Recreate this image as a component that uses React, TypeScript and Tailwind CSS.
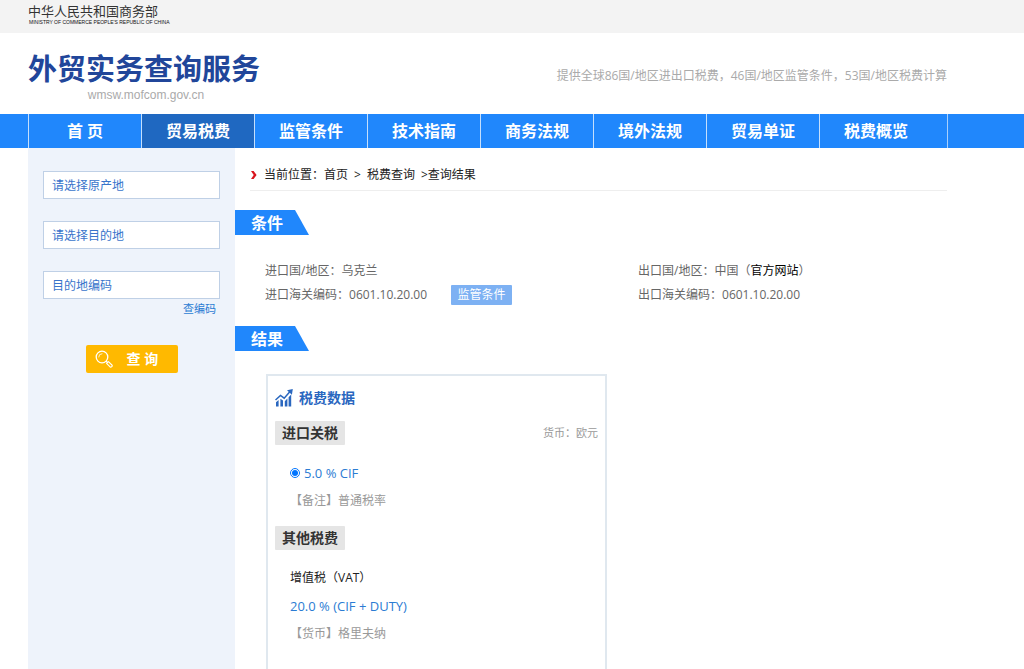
import type { ReactNode } from "react";

const navItems = [
  "首 页",
  "贸易税费",
  "监管条件",
  "技术指南",
  "商务法规",
  "境外法规",
  "贸易单证",
  "税费概览",
];

const fields = [
  { id: "origin", label: "请选择原产地" },
  { id: "destination", label: "请选择目的地" },
  { id: "code", label: "目的地编码" },
];

const SectionTitle = ({ children }: { children: ReactNode }) => (
  <h2 className="flex h-[25px] w-[74px] items-center bg-[#2087fc] pl-4 text-base font-bold text-white [clip-path:polygon(0_0,60px_0,100%_100%,0_100%)]">
    {children}
  </h2>
);

const Tag = ({ children }: { children: ReactNode }) => (
  <h4 className="flex h-6 w-[70px] items-center justify-center rounded-[1px] bg-[#e5e5e5] text-sm font-bold text-[#333]">
    {children}
  </h4>
);

const Header = () => (
  <header>
    <div className="h-[33px] bg-[#f3f3f3] pt-[3px] pl-7">
      <p className="text-[13px] leading-[17px] text-[#333]">中华人民共和国商务部</p>
      <p className="pl-px font-['Liberation_Sans',sans-serif] text-[5px] leading-[5px] text-[#111]">
        MINISTRY OF COMMERCE PEOPLE'S REPUBLIC OF CHINA
      </p>
    </div>
    <div className="mr-[77px] ml-7 flex h-[81px] items-center justify-between">
      <div className="pt-[7px]">
        <h1 className="text-[29px] leading-9 font-bold text-[#21469a]">外贸实务查询服务</h1>
        <p className="pl-1 text-center font-['Liberation_Sans',sans-serif] text-xs leading-4 text-[#aaa]">
          wmsw.mofcom.gov.cn
        </p>
      </div>
      <p className="pt-1 text-xs text-[#aaa]">
        提供全球86国/地区进出口税费，46国/地区监管条件，53国/地区税费计算
      </p>
    </div>
    <nav className="bg-[#2087fc] pr-[76px] pl-7">
      <ul className="flex h-[34px] border-r border-[#a9d0fc]">
        {navItems.map((item) => (
          <li key={item} className="w-[113px] border-l border-[#c5dffc]">
            <a
              href="#"
              className={`flex h-full items-center justify-center text-base font-bold text-white ${
                item === "贸易税费" ? "bg-[#1f68c1]" : ""
              }`}
            >
              {item}
            </a>
          </li>
        ))}
      </ul>
    </nav>
  </header>
);

const Sidebar = () => (
  <aside className="w-[207px] shrink-0 bg-[#eef3fb] px-[15px] pt-[23px]">
    <form>
      <div className="flex flex-col gap-[22px]">
        {fields.map(({ id, label }) => (
          <input
            key={id}
            id={id}
            aria-label={label}
            placeholder={label}
            className="h-7 w-full border border-[#bfd0e6] bg-white px-2 text-xs outline-none placeholder:text-[#3874cb]"
          />
        ))}
      </div>
      <a href="#" className="block pr-1 text-right text-[11px] leading-5 text-[#2b7cd3]">
        查编码
      </a>
      <button
        type="button"
        className="mx-auto mt-[26px] flex h-7 w-[92px] items-center rounded-xs bg-[#ffb900] pl-[9px] text-sm font-bold text-white"
      >
        <svg viewBox="0 0 18 18" className="mr-[14px] size-[18px]" fill="none" stroke="#fff">
          <circle cx="7" cy="7" r="5.8" strokeWidth="1.3" />
          <path d="M3.7 7A3.3 3.3 0 0 1 7 3.7" strokeWidth=".8" strokeLinecap="round" />
          <path d="m11 11 1.5 1.5" strokeWidth="1.3" />
          <path
            d="m11.6 13.4 1.8-1.8 3.5 3.4c1 1-.8 2.8-1.8 1.8z"
            strokeWidth="1.1"
            strokeLinejoin="round"
          />
        </svg>
        查 询
      </button>
    </form>
  </aside>
);

const Breadcrumb = () => (
  <div className="ml-[15px] flex h-[43px] items-center border-b border-[#eee] pt-3 text-xs text-[#222]">
    <svg viewBox="0 0 8 10" className="mr-1.5 h-[10px] w-2" fill="#d9151e">
      <path d="M1 1h2.6l3 4-3 4H1l2.7-4z" />
    </svg>
    <span>当前位置：</span>
    <a href="#">首页</a>
    <span className="mx-1.5">&gt;</span>
    <a href="#">税费查询</a>
    <span className="ml-1.5">&gt;查询结果</span>
  </div>
);

const TaxCard = () => (
  <div className="mt-[23px] ml-[31px] w-[341px] grow border-2 border-b-0 border-[#e0e8ef] px-[7px]">
    <h3 className="mt-[10px] flex h-6 items-center gap-1.5 text-sm font-bold text-[#2a67bf]">
      <svg viewBox="0 0 18 18" className="size-[18px]" fill="#2a67bf">
        <path d="M1 13.2 3.6 11v6.5H1zM5.4 9.8 8 11.6v5.9H5.4zM9.8 12.2l2.6-2.7v8H9.8zM13.6 8.2l2.6-2.7v12h-2.6z" />
        <path
          d="m.5 11 5-4.6 3.7 2.8 5.6-6.4"
          fill="none"
          stroke="#2a67bf"
          strokeWidth="1.5"
        />
        <path d="M12 1.2 17.8 0l-.9 5.8z" />
      </svg>
      税费数据
    </h3>
    <div className="mt-[11px] flex items-center justify-between">
      <Tag>进口关税</Tag>
      <span className="text-[11px] text-[#999]">货币：欧元</span>
    </div>
    <div className="mt-[14px] mb-[11px] ml-[15px] text-xs leading-7">
      <label className="flex h-7 items-center gap-1 text-[13px] text-[#2b7cd3]">
        <input type="radio" name="rate" defaultChecked className="size-[10px] accent-[#0075ff]" />
        5.0 % CIF
      </label>
      <p className="text-[#999]">【备注】普通税率</p>
    </div>
    <Tag>其他税费</Tag>
    <div className="mt-[14px] ml-[15px] text-xs leading-7">
      <p className="text-[#222]">增值税（VAT）</p>
      <p className="text-[13px] leading-7 text-[#2b7cd3]">20.0 % (CIF + DUTY)</p>
      <p className="text-[#999]">【货币】格里夫纳</p>
    </div>
  </div>
);

export default function App() {
  return (
    <div
      lang="zh-CN"
      className="flex min-h-screen flex-col bg-white font-['Open_Sans','Noto_Sans_CJK_SC',sans-serif]"
    >
      <Header />
      <div className="mr-[77px] ml-7 flex grow">
        <Sidebar />
        <main className="flex grow flex-col">
          <Breadcrumb />
          <div className="mt-[19px]">
            <SectionTitle>条件</SectionTitle>
          </div>
          <dl className="mt-6 ml-[30px] grid grid-cols-[373px_1fr] text-xs leading-6 text-[#666]">
            <div className="flex">
              <dt>进口国/地区：</dt>
              <dd>乌克兰</dd>
            </div>
            <div className="flex">
              <dt>出口国/地区：</dt>
              <dd>
                中国（
                <a href="#" className="text-black">
                  官方网站
                </a>
                ）
              </dd>
            </div>
            <div className="flex items-center">
              <dt>进口海关编码：</dt>
              <dd>0601.10.20.00</dd>
              <dd className="ml-6 flex">
                <button
                  type="button"
                  className="flex h-5 w-[61px] items-center justify-center rounded-[1px] bg-[#7db1f3] text-white"
                >
                  监管条件
                </button>
              </dd>
            </div>
            <div className="flex">
              <dt>出口海关编码：</dt>
              <dd>0601.10.20.00</dd>
            </div>
          </dl>
          <div className="mt-[19px]">
            <SectionTitle>结果</SectionTitle>
          </div>
          <TaxCard />
        </main>
      </div>
    </div>
  );
}
